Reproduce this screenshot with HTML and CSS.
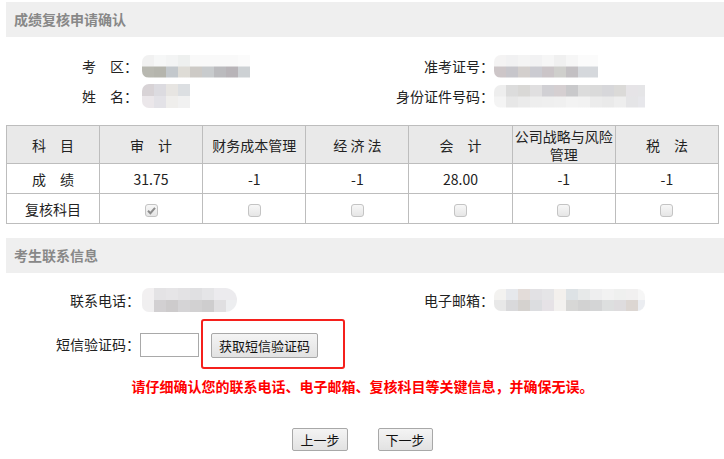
FILE: index.html
```html
<!DOCTYPE html>
<html lang="zh-CN">

<head>
    <meta charset="UTF-8">
    <meta name="viewport" content="width=device-width, initial-scale=1.0">
    <title>成绩复核申请确认</title>
    <link rel="stylesheet" href="styles.css">
</head>

<body>
    <div class="page">
        <div class="section-title">成绩复核申请确认</div>

        <div class="info-grid">
            <div class="label">考&emsp;区：</div>
            <div class="value"><div class="blur blur-zone"></div></div>
            <div class="label">准考证号：</div>
            <div class="value"><div class="blur blur-ticket"></div></div>
            <div class="label">姓&emsp;名：</div>
            <div class="value"><div class="blur blur-name"></div></div>
            <div class="label">身份证件号码：</div>
            <div class="value"><div class="blur blur-id"></div></div>
        </div>

        <table class="score-table">
            <colgroup>
                <col class="col-first">
                <col><col><col><col><col><col>
            </colgroup>
            <tr class="head">
                <th>科&emsp;目</th>
                <th>审&emsp;计</th>
                <th>财务成本管理</th>
                <th>经 济 法</th>
                <th>会&emsp;计</th>
                <th>公司战略与风险管理</th>
                <th>税&emsp;法</th>
            </tr>
            <tr>
                <td>成&emsp;绩</td>
                <td>31.75</td>
                <td>-1</td>
                <td>-1</td>
                <td>28.00</td>
                <td>-1</td>
                <td>-1</td>
            </tr>
            <tr>
                <td>复核科目</td>
                <td><span class="chk checked"><svg viewBox="0 0 13 13" width="13" height="13"><path d="M3 6.8 L5.4 9.2 L10 3.8" fill="none" stroke="#8d8d8d" stroke-width="2"/></svg></span></td>
                <td><span class="chk"></span></td>
                <td><span class="chk"></span></td>
                <td><span class="chk"></span></td>
                <td><span class="chk"></span></td>
                <td><span class="chk"></span></td>
            </tr>
        </table>

        <div class="section-title">考生联系信息</div>

        <div class="info-grid contact">
            <div class="label">联系电话：</div>
            <div class="value"><div class="blur blur-phone"></div></div>
            <div class="label">电子邮箱：</div>
            <div class="value"><div class="blur blur-email"></div></div>
        </div>

        <div class="sms-row">
            <div class="label">短信验证码：</div>
            <input class="sms-input" type="text">
            <div class="highlight">
                <button class="btn btn-sms">获取短信验证码</button>
            </div>
        </div>

        <p class="notice">请仔细确认您的联系电话、电子邮箱、复核科目等关键信息，并确保无误。</p>

        <div class="actions">
            <button class="btn">上一步</button>
            <button class="btn">下一步</button>
        </div>
    </div>
</body>

</html>
```

FILE: styles.css
```css
body {
    margin: 0;
    font-family: "Noto Sans CJK SC", "Liberation Sans", sans-serif;
    font-size: 14px;
    color: #222;
    background: #fff;
}

.page {
    padding: 2px 0 0 6px;
}

.section-title {
    height: 35px;
    line-height: 35px;
    padding-left: 8px;
    background-color: #efefef;
    color: #888;
    font-weight: bold;
}

.info-grid {
    display: grid;
    grid-template-columns: 132px 214px 142px 1fr;
    grid-auto-rows: 30px;
    align-items: center;
    margin: 14px 0;
    line-height: 18px;
}

.info-grid.contact {
    grid-template-columns: 134px 212px 142px 1fr;
    margin: 12px 0 0;
}

.label {
    text-align: right;
    white-space: nowrap;
}

.value {
    padding-left: 4px;
}

.contact .value {
    padding-left: 2px;
}

.info-grid .value:nth-child(4n) {
    padding-left: 0;
}

/* mosaic blocks covering personal data */
.blur {
    height: 23px;
    border-radius: 7px 0 0 7px;
    background-repeat: no-repeat;
    background-size: 100% 50%;
    background-position: top, bottom;
}

.blur-zone {
    width: 108px;
    background-image:
        linear-gradient(to right, #f1f1f1 0 12px, #f6f7f7 12px 24px, #f3f4f4 24px 36px, #eef0ef 36px 48px, #f9f9f9 48px 96px, #fbfbfb 96px),
        linear-gradient(to right, #b8b8b0 0 12px, #b5b5ad 12px 24px, #c3c8cc 24px 36px, #dedcd6 36px 48px, #cdcac6 48px 60px, #c8cbcd 60px 72px, #bbbbbe 72px 84px, #b8b4b8 84px 96px, #cdd1d4 96px);
}

.blur-name {
    width: 48px;
    height: 24px;
    background-image:
        linear-gradient(to right, #d8d3d6 0 12px, #dcdbe0 12px 24px, #e7e5e2 24px 36px, #dcdfe2 36px),
        linear-gradient(to right, #ebe7ea 0 12px, #e3e2e7 12px 24px, #efeeec 24px 36px, #f1f1f1 36px);
}

.blur-ticket {
    width: 104px;
    background-image:
        linear-gradient(to right, #f4f3f3 0 12px, #f1f1f2 12px 24px, #f4f4f4 24px 36px, #f2f2f3 36px 48px, #f6f6f6 48px 60px, #f0f0f0 60px 72px, #f6f6f6 72px 84px, #fbfbfb 84px),
        linear-gradient(to right, #cdc6c8 0 12px, #c7c6cb 12px 24px, #d3cfcd 24px 36px, #cbcbd1 36px 48px, #cbc5c8 48px 60px, #cfcfcc 60px 72px, #c3c0c3 72px 84px, #d5d8dc 84px);
}

.blur-id {
    width: 151px;
    background-image:
        linear-gradient(to right, #eeeeee 0 12px, #dcdcdc 12px 24px, #d9d8d6 24px 36px, #e0dfe0 36px 48px, #d1d0d4 48px 60px, #d5cfd1 60px 72px, #c9c9cb 72px 84px, #dcdcdc 84px 96px, #dadada 96px 108px, #d7d7da 108px 120px, #dbdad8 120px 132px, #e6e4e7 132px 144px, #e5e5e7 144px),
        linear-gradient(to right, #f4f4f4 0 12px, #e7e7e7 12px 24px, #ebebeb 24px 36px, #eeeeee 36px 48px, #efefef 48px 60px, #f0f0f0 60px 72px, #f3f3f3 72px 84px, #f2f2f2 84px 96px, #ececec 96px 108px, #eaeaea 108px 120px, #eeeeee 120px 132px, #e5e5e7 132px 144px, #e7e7eb 144px);
}

.blur-phone {
    width: 95px;
    height: 24px;
    border-radius: 7px 12px 12px 7px;
    background-image:
        linear-gradient(to right, #f2f0f1 0 12px, #e4e3e5 12px 24px, #e6e5e7 24px 36px, #e3e2e4 36px 48px, #e0e0e2 48px 60px, #e5e5e7 60px 72px, #ecebee 72px),
        linear-gradient(to right, #f0eff0 0 12px, #d2d0d2 12px 24px, #cdcbcc 24px 36px, #d5d4d6 36px 48px, #d2d1d2 48px 60px, #cecdce 60px 72px, #e0dfe1 72px 84px, #edeef0 84px);
}

.blur-email {
    width: 151px;
    height: 22px;
    border-radius: 7px 8px 8px 7px;
    background-image:
        linear-gradient(to right, #f3f2f0 0 12px, #e6e8ec 12px 24px, #e3dcd9 24px 36px, #e2e1e4 36px 48px, #e5e5e7 48px 60px, #f3f0ed 60px 72px, #dde2e5 72px 84px, #e7e9e9 84px 96px, #eeeeef 96px 108px, #f2f2f2 108px 120px, #eff0ef 120px 132px, #f1f0f0 132px 144px, #f6f6f6 144px),
        linear-gradient(to right, #e8e8e8 0 12px, #d9d9db 12px 24px, #d5d2cf 24px 36px, #dcdde0 36px 48px, #e6e2e6 48px 60px, #f3f1ef 60px 72px, #d7d7d6 72px 84px, #d2d2d2 84px 96px, #d4d5d6 96px 108px, #dddfdf 108px 120px, #dedcde 120px 132px, #dcd6d2 132px 144px, #ebedf1 144px);
}

.score-table {
    width: 713px;
    table-layout: fixed;
    border-collapse: collapse;
    margin-bottom: 14px;
}

.score-table .col-first {
    width: 93px;
}

.score-table th,
.score-table td {
    border: 1px solid #bdbdbd;
    text-align: center;
    font-weight: normal;
    padding: 0 2px;
    line-height: 18px;
    height: 29px;
}

.score-table .head th {
    background-color: #e9e9e9;
    height: 37px;
}

.chk {
    display: inline-block;
    width: 13px;
    height: 13px;
    box-sizing: border-box;
    border: 1px solid #c4c4c4;
    border-radius: 3px;
    background: linear-gradient(#f7f7f7, #e6e6e6);
    vertical-align: middle;
}

.chk svg {
    display: block;
    margin: -1px 0 0 -1px;
}

.sms-row {
    display: flex;
    align-items: center;
    margin-top: 4px;
    line-height: 18px;
}

.sms-row .label {
    width: 134px;
}

.sms-input {
    width: 59px;
    height: 24px;
    box-sizing: border-box;
    border: 1px solid #a9a9a9;
    margin: 2px 0 0;
    padding: 0;
}

.highlight {
    margin-left: 2px;
    padding: 12px 25px 9px 8px;
    border: 2px solid #f5201c;
    border-radius: 3px;
}

.btn {
    height: 23px;
    padding: 0 7px;
    font-family: "Noto Sans CJK SC", sans-serif;
    font-size: 13px;
    line-height: 19px;
    color: #111;
    border: 1px solid #a8a8a8;
    border-radius: 2px;
    background: linear-gradient(#f4f4f4, #e2e2e2);
}

.btn-sms {
    display: block;
    height: 25px;
}

.notice {
    width: 713px;
    margin: 8px 0 0;
    line-height: 18px;
    text-align: center;
    color: #f00;
    font-weight: bold;
}

.actions {
    width: 713px;
    display: flex;
    justify-content: center;
    gap: 30px;
    margin-top: 33px;
}
```
